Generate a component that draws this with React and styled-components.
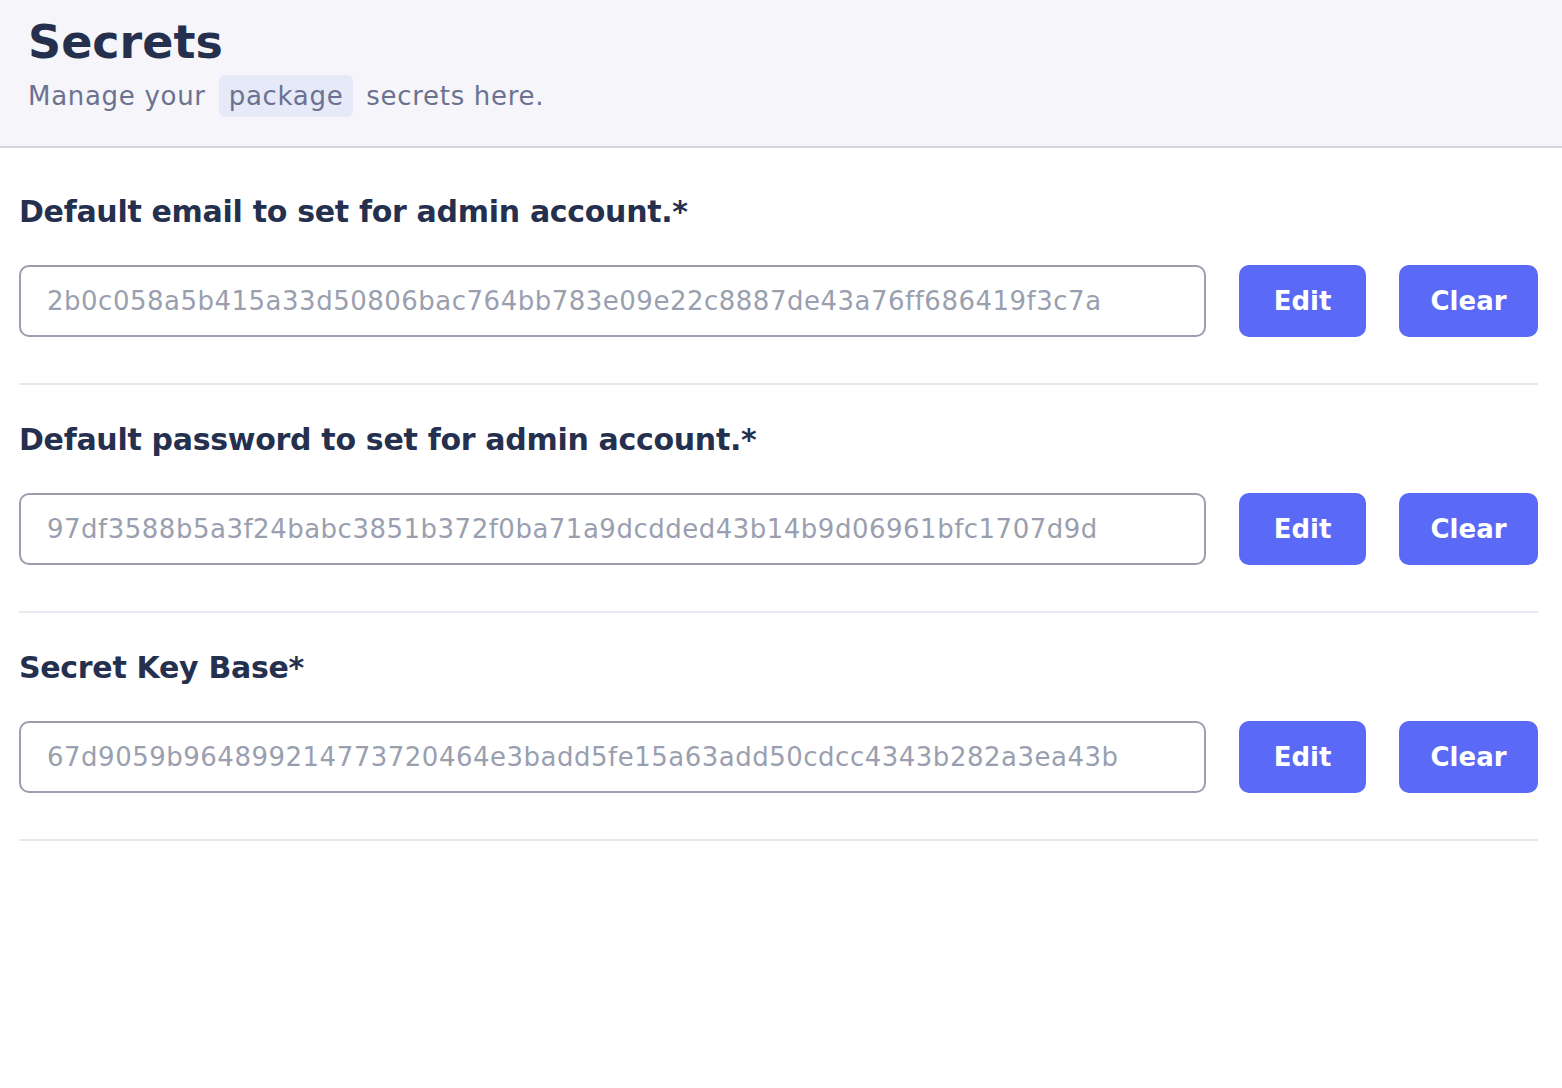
import styled, { createGlobalStyle } from "styled-components";

const GlobalStyle = createGlobalStyle`
  body {
    margin: 0;
    background: #ffffff;
    font-family: "DejaVu Sans", "Noto Sans", sans-serif;
  }
`;

const Header = styled.header`
  background: #f5f5fa;
  border-bottom: 2px solid #d3d5e1;
  padding: 14px 28px 0;
  height: 148px;
  box-sizing: border-box;
`;

const Title = styled.h1`
  margin: 0;
  font-size: 46px;
  line-height: 56px;
  font-weight: 700;
  color: #25304f;
`;

const Subtitle = styled.p`
  margin: 5px 0 0;
  font-size: 26px;
  line-height: 42px;
  letter-spacing: 0.7px;
  color: #6b7290;
`;

const Chip = styled.span`
  display: inline-block;
  background: #e6e9f8;
  border-radius: 6px;
  padding: 0 10px;
  margin: 0 4px;
`;

const Main = styled.main`
  padding: 9px 24px 0 19px;
`;

const Section = styled.section`
  padding: 35px 0 46px;
  border-bottom: 2px solid #e8e9f0;
`;

const Label = styled.h2`
  margin: 0 0 33px;
  font-size: 30px;
  line-height: 40px;
  font-weight: 700;
  letter-spacing: -0.3px;
  color: #25304f;
`;

const Row = styled.div`
  display: flex;
  align-items: center;
  gap: 33px;
`;

const Field = styled.div`
  flex: 1;
  height: 72px;
  box-sizing: border-box;
  border: 2px solid #9a9eae;
  border-radius: 10px;
  padding: 0 26px;
  display: flex;
  align-items: center;
  font-size: 26px;
  letter-spacing: 0.5px;
  color: #9a9fb0;
  white-space: nowrap;
  overflow: hidden;
`;

const Button = styled.button`
  width: ${(p) => p.$w}px;
  height: 72px;
  border: none;
  border-radius: 10px;
  background: #5a6af6;
  color: #ffffff;
  font-family: inherit;
  font-size: 26px;
  font-weight: 700;
  cursor: pointer;
`;

const secrets = [
  {
    label: "Default email to set for admin account.*",
    value: "2b0c058a5b415a33d50806bac764bb783e09e22c8887de43a76ff686419f3c7a",
  },
  {
    label: "Default password to set for admin account.*",
    value: "97df3588b5a3f24babc3851b372f0ba71a9dcdded43b14b9d06961bfc1707d9d",
  },
  {
    label: "Secret Key Base*",
    value: "67d9059b964899214773720464e3badd5fe15a63add50cdcc4343b282a3ea43b",
  },
];

export default function App() {
  return (
    <>
      <GlobalStyle />
      <Header>
        <Title>Secrets</Title>
        <Subtitle>
          Manage your <Chip>package</Chip> secrets here.
        </Subtitle>
      </Header>
      <Main>
        {secrets.map((s) => (
          <Section key={s.label}>
            <Label>{s.label}</Label>
            <Row>
              <Field>{s.value}</Field>
              <Button $w={127}>Edit</Button>
              <Button $w={139}>Clear</Button>
            </Row>
          </Section>
        ))}
      </Main>
    </>
  );
}
